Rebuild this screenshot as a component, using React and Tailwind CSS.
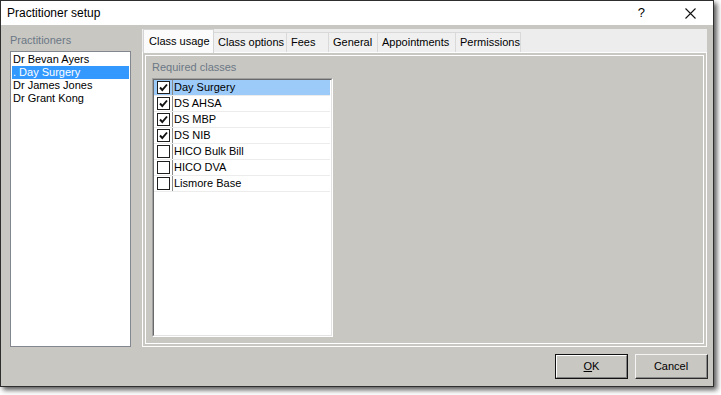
import { useState } from 'react'

const practitioners = ['Dr Bevan Ayers', '. Day Surgery', 'Dr James Jones', 'Dr Grant Kong']

const tabs = [
  { name: 'Class usage', w: 'w-[71px]' },
  { name: 'Class options', w: 'w-[73px]' },
  { name: 'Fees', w: 'w-[42px]' },
  { name: 'General', w: 'w-[49px]' },
  { name: 'Appointments', w: 'w-[78px]' },
  { name: 'Permissions', w: 'w-[65px]' },
]

const classes = [
  { name: 'Day Surgery', checked: true },
  { name: 'DS AHSA', checked: true },
  { name: 'DS MBP', checked: true },
  { name: 'DS NIB', checked: true },
  { name: 'HICO Bulk Bill', checked: false },
  { name: 'HICO DVA', checked: false },
  { name: 'Lismore Base', checked: false },
]

function CheckBox({ checked }) {
  return (
    <div className="w-[13px] h-[13px] border border-[#1e1e1e] bg-white flex items-center justify-center">
      {checked && (
        <svg width="11" height="11" viewBox="0 0 11 11">
          <polyline points="2,5.5 4.3,8 9,2.5" fill="none" stroke="#111" strokeWidth="1.9" />
        </svg>
      )}
    </div>
  )
}

export default function App() {
  const [selected, setSelected] = useState(1)
  const [activeRow, setActiveRow] = useState(0)

  return (
    <div className="w-[721px] h-[395px] bg-white" style={{ fontFamily: '"Liberation Sans", Arial, sans-serif' }}>
      <div className="w-[714px] h-[387px] border border-[#2e2e2e] bg-[#c9c7c2] flex flex-col shadow-[3px_3px_5px_rgba(0,0,0,0.65)]">
        {/* title bar */}
        <div className="h-[24px] bg-white flex items-center pl-[6px] text-[12px] text-black shrink-0">
          <span className="flex-1">Practitioner setup</span>
          <span className="text-[13px] mr-[40px]">?</span>
          <svg width="11" height="11" viewBox="0 0 11 11" className="mr-[17px]">
            <path d="M0.5 0.5 L10.5 10.5 M10.5 0.5 L0.5 10.5" stroke="#111" strokeWidth="1.1" />
          </svg>
        </div>

        <div className="flex-1 flex flex-col text-[11px] text-black">
          <div className="flex pl-[9px] pt-[4px] gap-[11px]">
            {/* practitioners list */}
            <div className="w-[121px] flex flex-col">
              <div className="h-[22px] flex items-center text-[#6b7885] text-[11px]">Practitioners</div>
              <div className="h-[296px] border border-[#828790] bg-white pt-[1px] px-[1px]">
                {practitioners.map((p, i) => (
                  <div
                    key={p}
                    onClick={() => setSelected(i)}
                    className={`h-[13px] leading-[13px] pl-[1px] ${selected === i ? 'bg-[#3399ff] text-white' : 'text-black'}`}
                  >
                    {p}
                  </div>
                ))}
              </div>
            </div>

            {/* tab control */}
            <div className="w-[565px] flex flex-col">
              <div className="h-[23px] bg-[#ededed] flex items-end pl-[1px]">
                {tabs.map((t, i) =>
                  i === 0 ? (
                    <div
                      key={t.name}
                      className={`${t.w} h-[24px] -mb-[1px] relative z-10 bg-[#fbfbfb] border-t border-l border-r border-[#d4d4d4] flex items-start pt-[3px] pl-[5px]`}
                    >
                      {t.name}
                    </div>
                  ) : (
                    <div
                      key={t.name}
                      className={`${t.w} h-[20px] bg-[#f0f0f0] border-t border-r border-[#d9d9d9] flex items-center pl-[4px]`}
                    >
                      {t.name}
                    </div>
                  )
                )}
              </div>
              <div className="h-[295px] border border-[#fdfdfd] p-[2px]">
                <div className="h-full border border-white pl-[6px] pt-[3px]">
                  <div className="h-[16px] flex items-center text-[#6b7885]">Required classes</div>
                  <div className="mt-[3px] w-[181px] h-[259px] border-t border-l border-[#a0a0a0] border-r border-b border-r-white border-b-white">
                    <div className="h-full border-t border-l border-[#696969] border-r border-b border-r-[#e3e3e3] border-b-[#e3e3e3] bg-white">
                      {classes.map((c, i) => (
                        <div
                          key={c.name}
                          onClick={() => setActiveRow(i)}
                          className={`h-[16px] flex border-b border-[#ececec] mr-[1px] ${activeRow === i ? 'bg-[#9ccbfa]' : ''}`}
                        >
                          <div className="w-[19px] flex items-center pl-[3px] border-r border-[#8a8a8a]">
                            <CheckBox checked={c.checked} />
                          </div>
                          <div className="flex items-center pl-[1px]">{c.name}</div>
                        </div>
                      ))}
                    </div>
                  </div>
                </div>
              </div>
            </div>
          </div>

          {/* buttons */}
          <div className="flex justify-end gap-[7px] pr-[5px] mt-[7px]">
            <button className="w-[73px] h-[25px] border border-[#111] bg-[#c9c7c2] flex">
              <span className="flex-1 flex items-center justify-center border-t border-l border-white border-r border-b border-r-[#808080] border-b-[#808080] text-[11px] text-black">
                <span className="underline underline-offset-1">O</span>K
              </span>
            </button>
            <button className="w-[73px] h-[25px] border-t border-l border-[#f4f4f4] border-r border-b border-r-[#2a2a2a] border-b-[#2a2a2a] bg-[#c9c7c2] flex">
              <span className="flex-1 flex items-center justify-center border-r border-b border-r-[#8a8a8a] border-b-[#8a8a8a] text-[11px] text-black">
                Cancel
              </span>
            </button>
          </div>
        </div>
      </div>
    </div>
  )
}
